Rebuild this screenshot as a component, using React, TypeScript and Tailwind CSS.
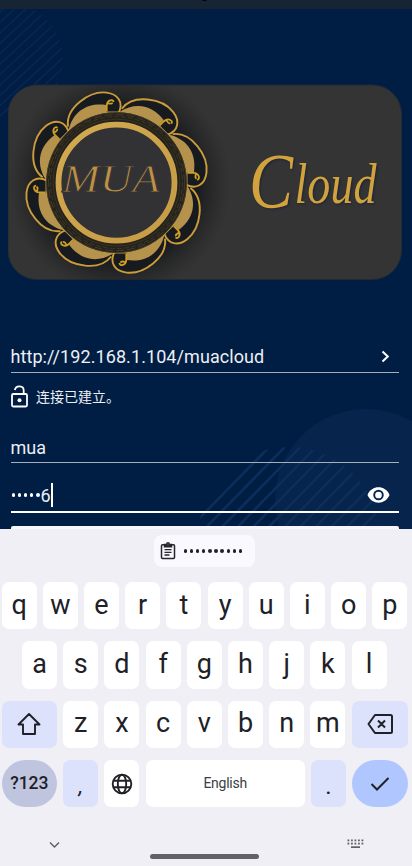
import type { ReactNode } from 'react';

const ANGLES = [0, 45, 90, 135, 180, 225, 270, 315];

function Backdrop() {
  return (
    <svg className="absolute inset-0" width="412" height="529" viewBox="0 0 412 529" fill="none">
      <defs>
        <clipPath id="tl"><circle cx="5" cy="60" r="58" /></clipPath>
        <clipPath id="br"><circle cx="289" cy="538" r="91" /></clipPath>
      </defs>
      <circle cx="366" cy="500" r="91" fill="#07244d" />
      <g clipPath="url(#tl)" stroke="#082654" strokeWidth="1.6">
        {Array.from({ length: 20 }, (_, i) => (
          <path key={i} d={`M-10 ${11 + i * 10.4}l140 -130`} />
        ))}
      </g>
      <g clipPath="url(#br)" stroke="#0b2e5a" strokeWidth="2.6">
        {Array.from({ length: 17 }, (_, i) => (
          <path key={i} d={`M${80 + i * 15.6} 640l200 -204`} />
        ))}
      </g>
    </svg>
  );
}

function Logo() {
  return (
    <svg className="block" width="394" height="196" viewBox="8 84 394 196" fill="none">
      <defs>
        <linearGradient id="gold" x1="0" y1="0" x2="1" y2="1">
          <stop offset="0" stopColor="#d3aa50" />
          <stop offset="1" stopColor="#c59b45" />
        </linearGradient>
        <radialGradient id="shade">
          <stop offset="0.7" stopColor="#15171b" stopOpacity="0.85" />
          <stop offset="1" stopColor="#222" stopOpacity="0" />
        </radialGradient>
        <clipPath id="card"><rect x="8" y="85" width="393.5" height="194.5" rx="29" /></clipPath>
      </defs>
      <rect x="8" y="85" width="393.5" height="194.5" rx="29" fill="#343434" stroke="#222a34" />
      <circle cx="119" cy="184" r="112" fill="url(#shade)" clipPath="url(#card)" />
      <g transform="translate(116.5 182.6)">
        {ANGLES.map((a) => (
          <g key={a} transform={`rotate(${a})`}>
            <path d="M-48.500 -56C-51 -75 -27 -92 -10 -90C2 -88.500 7 -80 2.300 -70" fill="#171b20" stroke="#cb9d3a" strokeWidth="1.900" />
            <path d="M-48 -52C-43 -73 -27 -80 -10.500 -77.500L-10.500 -71L2 -71L4 -60Z" fill="#b5934c" />
            <path d="M-9.800 -71V-77C-9.500 -83 -3 -84 -3 -80.500M-9 -79.500C-6 -79 -5 -78 -4 -80" stroke="#cf9f24" strokeWidth="1.8" />
          </g>
        ))}
        <circle r="65" stroke="#24221d" strokeWidth="10.500" />
        <circle r="63.500" stroke="#53462a" strokeWidth="0.5" />
        <circle r="66" stroke="#463d27" strokeWidth="0.8" strokeDasharray="5 2" />
        <circle r="68" stroke="#5c4c26" strokeWidth="0.6" strokeDasharray="8 3" />
        <circle r="70" stroke="#4a4027" strokeWidth="0.8" />
        <circle r="58" fill="#323235" stroke="url(#gold)" strokeWidth="5.8" />
      </g>
      <g className="font-['Liberation_Serif',serif] italic">
        <text x="62" y="191.500" fontSize="41" textLength="98" lengthAdjust="spacingAndGlyphs" fill="#c09142" stroke="#323235" strokeWidth="0.9">MUA</text>
        <g className="drop-shadow-[1.5px_1.5px_1px_#19243a]" fill="#d2a23c">
          <text x="249" y="206.500" fontSize="78" textLength="44" lengthAdjust="spacingAndGlyphs">C</text>
          <text x="294.500" y="202.500" fontSize="56" textLength="82" lengthAdjust="spacingAndGlyphs">loud</text>
        </g>
      </g>
    </svg>
  );
}

function Key({ children, className = 'w-[35px] bg-white' }: { children: ReactNode; className?: string }) {
  return (
    <div className={`flex h-[47.300px] shrink-0 items-center justify-center ${className.includes('rounded') ? '' : 'rounded-[7px]'} ${className}`}>{children}</div>
  );
}

function Letters({ keys }: { keys: string }) {
  return (
    <>
      {keys.split('').map((k) => (
        <Key key={k}><span className="pb-[1px] text-[27px] leading-none">{k}</span></Key>
      ))}
    </>
  );
}

function Keyboard() {
  return (
    <div className="h-[337px] bg-[#f0eff6] text-[#202127]">
      <div className="flex h-[53px] justify-center pt-[6px] pr-[3px]">
        <div className="flex h-8 w-[101px] items-center gap-[8px] rounded-[8px] bg-[#faf9ff] pl-[6px]">
          <svg width="16" height="18" viewBox="0 0 16 18" fill="none" stroke="#26272c" strokeWidth="1.5">
            <rect x="1.500" y="2.800" width="13" height="13.700" rx="1" />
            <path d="M4.500 2.500h7v2.300h-7z" fill="#26272c" />
            <circle cx="8" cy="2" r="1.200" fill="#faf9ff" />
            <path d="M4.500 7.700h7M4.500 10.300h7M4.500 13h5" strokeWidth="1.300" />
          </svg>
          <div className="flex gap-[2.900px]">
            {Array.from({ length: 10 }, (_, i) => (
              <i key={i} className="size-[3.200px] rounded-full bg-[#202127]" />
            ))}
          </div>
        </div>
      </div>
      <div className="flex flex-col gap-[12px] pl-[1.600px]">
        <div className="flex gap-[6.200px]"><Letters keys="qwertyuiop" /></div>
        <div className="flex gap-[6.200px] pl-[20.500px]"><Letters keys="asdfghjkl" /></div>
        <div className="flex gap-[6.200px]">
          <Key className="w-[55.500px] bg-[#dce2fb]">
            <svg width="24" height="24" viewBox="0 0 24 24" fill="none" stroke="#202127" strokeWidth="1.900" strokeLinejoin="round">
              <path d="M12 2L1.500 12.500H6V22H18V12.500H22.500Z" />
            </svg>
          </Key>
          <Letters keys="zxcvbnm" />
          <Key className="w-[56px] bg-[#dce2fb]">
            <svg width="26" height="22" viewBox="0 0 26 22" fill="none" stroke="#202127" strokeWidth="2" strokeLinejoin="round">
              <path d="M8 2H23.500Q25 2 25 3.500V18.500Q25 20 23.500 20H8L1.500 11ZM11 7.500L18 14.500M18 7.500L11 14.500" />
            </svg>
          </Key>
        </div>
        <div className="flex gap-[6.200px]">
          <Key className="w-[55.500px] rounded-[24px] bg-[#c0c5df] text-[17.500px] font-medium">?123</Key>
          <Key className="w-[35px] bg-[#dce2fb]"><span className="pt-[4px] text-[22px] leading-none italic">,</span></Key>
          <Key>
            <svg width="22" height="22" viewBox="0 0 22 22" fill="none" stroke="#202127" strokeWidth="1.900">
              <circle cx="11" cy="11" r="9.300" />
              <ellipse cx="11" cy="11" rx="4.200" ry="9.300" />
              <path d="M2.500 7.800H19.500M2.500 14.200H19.500" />
            </svg>
          </Key>
          <Key className="w-[159px] bg-white text-[14px] tracking-[-0.250px] text-[#3c3d43]">English</Key>
          <Key className="w-[35px] bg-[#dce2fb]"><span className="pt-[4px] text-[24px] leading-none">.</span></Key>
          <Key className="w-[56px] rounded-[24px] bg-[#b0c6ff]">
            <svg width="20" height="16" viewBox="0 0 20 16" fill="none" stroke="#202127" strokeWidth="2">
              <path d="M1.500 8L7 13.500L18.500 2" />
            </svg>
          </Key>
        </div>
      </div>
      <div className="flex h-[58px] justify-between pt-[32px] pr-[48.500px] pl-[49px]">
        <svg className="mt-[2px]" width="11" height="9" viewBox="0 0 11 9" fill="none" stroke="#606168" strokeWidth="1.500">
          <path d="M1 1.500L5.500 6L10 1.500" />
        </svg>
        <div className="mt-[15px] ml-[3px] h-[4.500px] w-[109px] rounded-full bg-[#616167]" />
        <svg width="17" height="10" viewBox="0 0 17 10" fill="#606168">
          {[0, 1, 2, 3, 4].map((c) => (
            <g key={c}>
              <rect x={0.5 + c * 3.5} y="0.500" width="1.800" height="1.800" />
              <rect x={0.5 + c * 3.5} y="3.700" width="1.800" height="1.800" />
            </g>
          ))}
          <rect x="4" y="7.300" width="9" height="1.700" />
        </svg>
      </div>
    </div>
  );
}

export default function App() {
  return (
    <div className="h-[866px] w-[412px] overflow-hidden bg-[#001e44] font-[Roboto,'Noto_Sans_CJK_SC',sans-serif]">
      <div className="relative h-[529px] overflow-hidden">
        <Backdrop />
        <div className="relative flex flex-col">
          <div className="flex h-[9px] justify-center overflow-hidden bg-[#172434]">
            <div className="-mt-[8px] -ml-[3px] size-[9px] rounded-full bg-black" />
          </div>
          <div className="pt-[75px] pl-2"><Logo /></div>
          <div className="mr-[13.500px] ml-[10.500px] flex flex-col text-[#eceff3]">
            <div className="mt-[60px] flex h-[33px] items-center justify-between border-b border-[#a7afbd]">
              <span className="pt-[2px] text-[18px] leading-none tracking-[0.080px]">http://192.168.1.104/muacloud</span>
              <svg className="mr-[9px]" width="9" height="13" viewBox="0 0 9 13" fill="none" stroke="#fff" strokeWidth="2">
                <path d="M1.500 1.500L6.800 6.500L1.500 11.500" />
              </svg>
            </div>
            <div className="mt-[11px] flex h-[26px] items-center gap-[8.500px]">
              <svg className="-mt-[2px]" width="17" height="23" viewBox="0 0 17 23" fill="none" stroke="#fff" strokeWidth="1.800">
                <rect x="1" y="9" width="15" height="12.500" rx="1.200" />
                <path d="M3.800 5C5 0 12.700 0.300 12.700 5.500V9" />
                <circle cx="8.500" cy="15.200" r="2" fill="#fff" stroke="none" />
              </svg>
              <span className="text-[14px] leading-none">连接已建立。</span>
            </div>
            <div className="mt-[23px] flex h-[30px] items-center border-b border-[#a7afbd] pt-[1px] text-[18px] leading-none tracking-[0.080px]">mua</div>
            <div className="flex h-[50px] items-center border-b-2 border-white pt-[16px]">
              <div className="flex gap-[2.400px] pl-[1px]">
                {[0, 1, 2, 3, 4].map((i) => <i key={i} className="size-[3.700px] rounded-full bg-white" />)}
              </div>
              <span className="ml-[1px] pt-[1px] text-[18px] leading-none">6</span>
              <div className="h-[24px] w-[2px] bg-white" />
              <svg className="mr-[9px] ml-auto" width="23" height="16" viewBox="0 0 23 16" fill="none">
                <path d="M0.500 8C4.700 -2.200 18.300 -2.200 22.500 8C18.300 18.200 4.700 18.200 0.500 8Z" fill="#fff" />
                <circle cx="11.500" cy="8" r="4.300" stroke="#07244d" strokeWidth="1.900" />
              </svg>
            </div>
            <div className="mt-[13px] h-[20px] rounded-[2px] bg-[#f7f7fb]" />
          </div>
        </div>
      </div>
      <Keyboard />
    </div>
  );
}
